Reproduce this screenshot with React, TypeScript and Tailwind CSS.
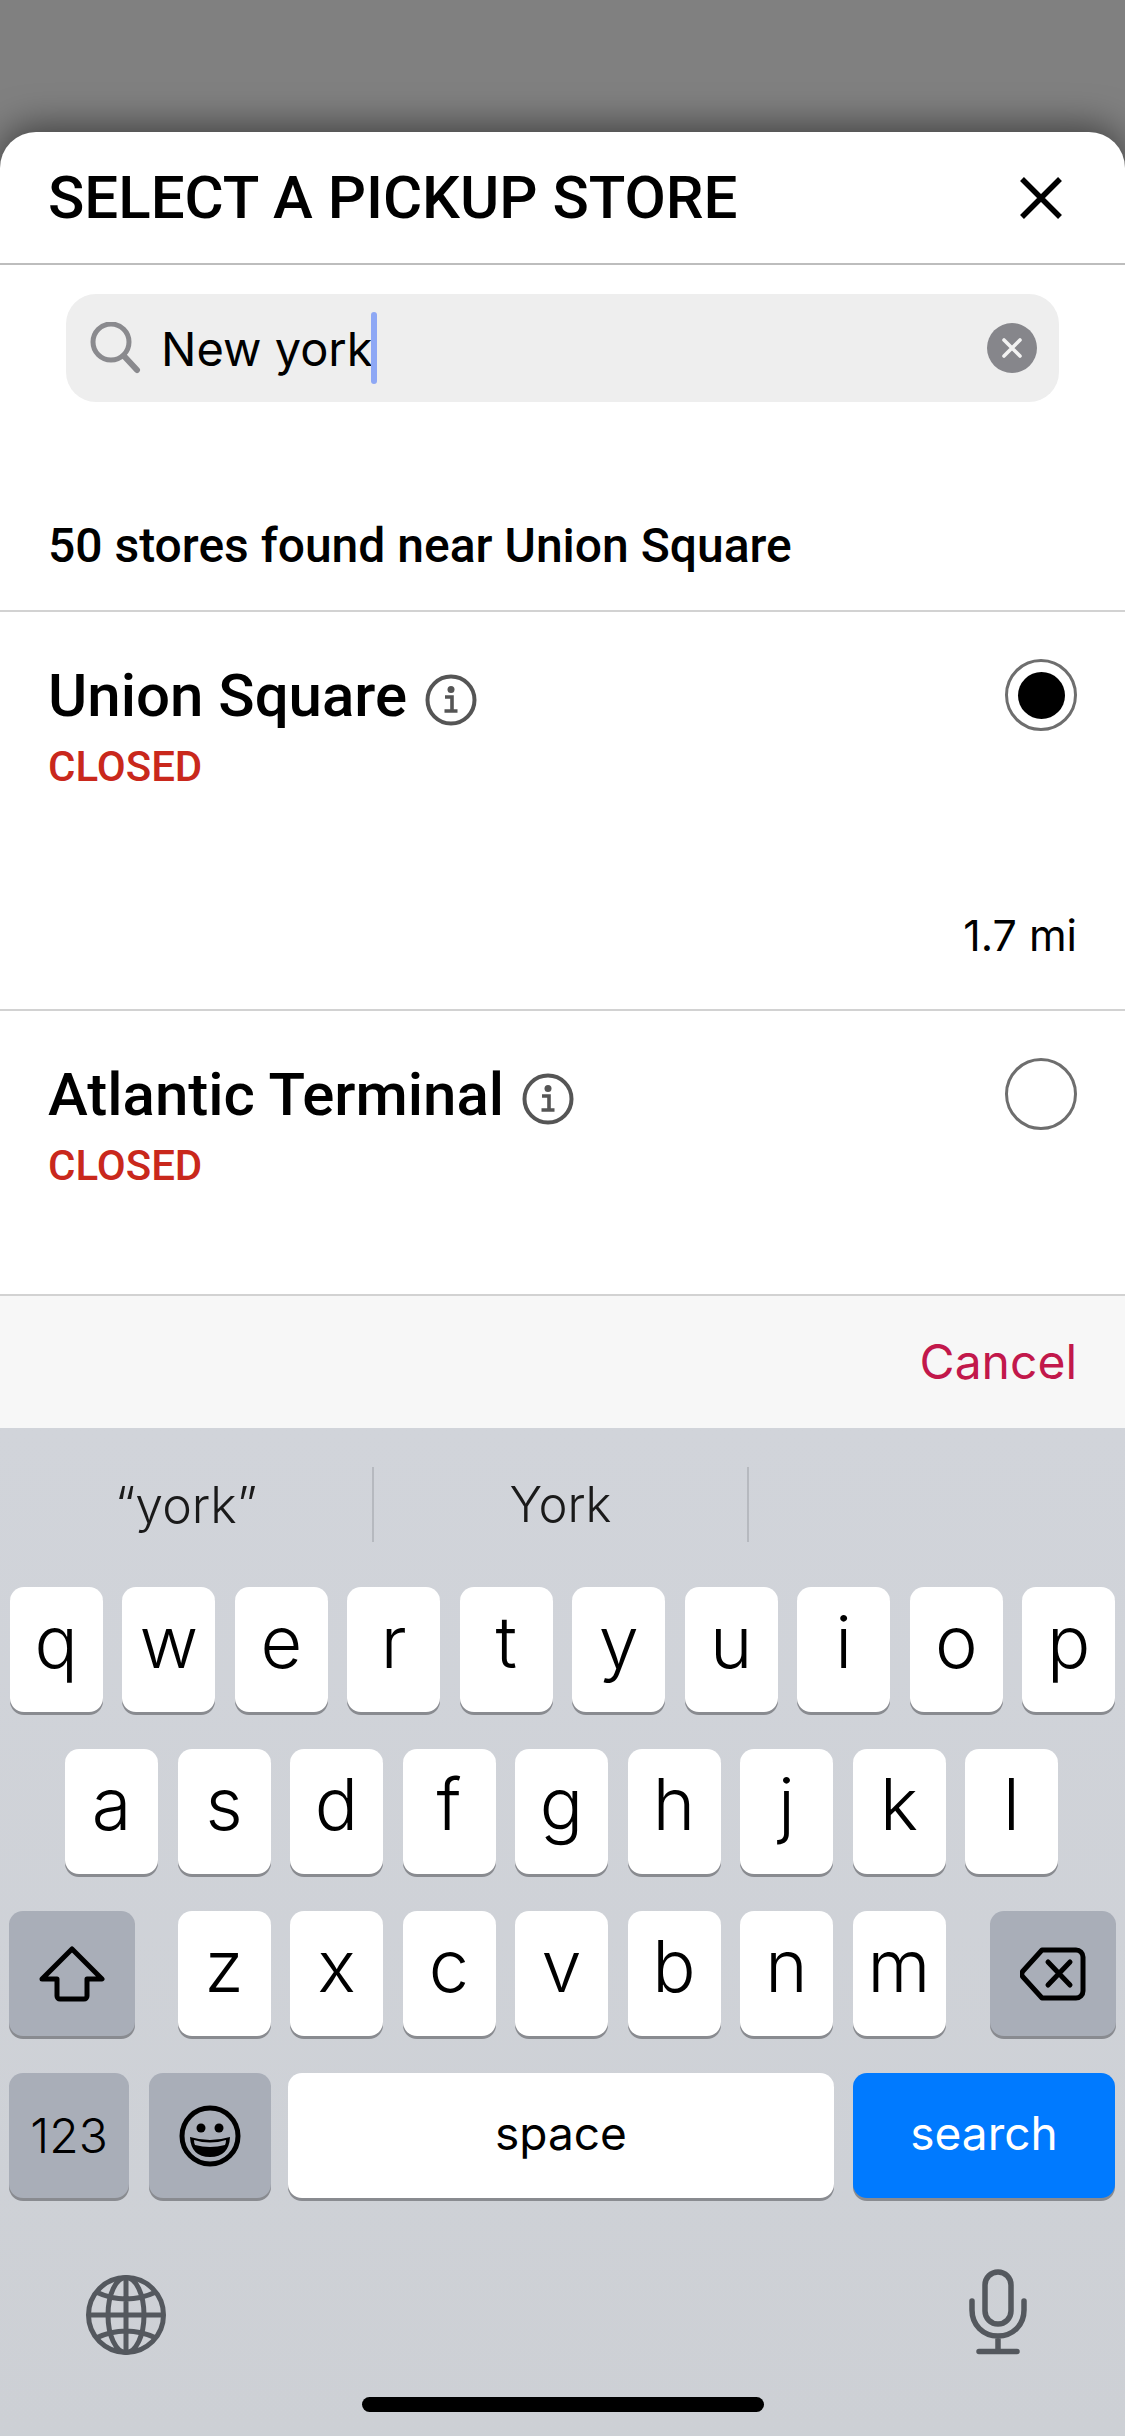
import React from 'react'

const roboto = "font-['Roboto',sans-serif]"
const ios = "font-['Inter',sans-serif]"

const rows = ['qwertyuiop', 'asdfghjkl', 'zxcvbnm']

const InfoIcon = () => (
  <svg width="52" height="52" viewBox="0 0 52 52" fill="none" className="ml-[18px] mt-[15px] shrink-0">
    <circle cx="26" cy="26" r="23.5" stroke="#555" strokeWidth="4" />
    <circle cx="26" cy="15.5" r="3.5" fill="#555" />
    <path d="M20 23h7v14M19.5 37h13" stroke="#555" strokeWidth="3.6" />
  </svg>
)

const Radio = ({ selected }: { selected?: boolean }) => (
  <div className="flex h-[72px] w-[72px] items-center justify-center rounded-full border-[3px] border-[#6e6e6e] bg-white">
    {selected && <div className="h-[47px] w-[47px] rounded-full bg-black" />}
  </div>
)

const StoreRow = ({ name, selected, distance, height }: { name: string; selected?: boolean; distance?: string; height: string }) => (
  <div className={`border-b-2 border-[#d2d2d2] px-[48px] pt-[47px] ${height}`}>
    <div className="flex items-start justify-between">
      <div>
        <div className={`flex items-start ${roboto}`}>
          <span className="text-[60px] font-medium leading-[74px] text-black">{name}</span>
          <InfoIcon />
        </div>
        <div className={`mt-[10px] text-[42px] font-medium leading-[48px] text-[#c9281c] ${roboto}`}>CLOSED</div>
      </div>
      <Radio selected={selected} />
    </div>
    {distance && <div className={`mt-[120px] text-right text-[43px] leading-[48px] text-black ${ios}`}>{distance}</div>}
  </div>
)

const Key = ({ children, className = '' }: { children: React.ReactNode; className?: string }) => (
  <div className={`flex h-[125px] items-center justify-center rounded-[14px] shadow-[0_3px_0_#898b90] ${className}`}>{children}</div>
)

const Letter = ({ ch }: { ch: string }) => (
  <Key className="w-[93px] bg-white">
    <span className={`-mt-[16px] text-[72px] font-light leading-none text-black ${ios}`}>{ch}</span>
  </Key>
)

const ShiftIcon = () => (
  <svg width="66" height="56" viewBox="0 0 66 56" fill="none">
    <path d="M33 3 L63 33 H48 V50 a3 3 0 0 1-3 3 H21 a3 3 0 0 1-3-3 V33 H3 Z" stroke="#000" strokeWidth="5" strokeLinejoin="round" />
  </svg>
)

const BackspaceIcon = () => (
  <svg width="66" height="54" viewBox="0 0 66 54" fill="none">
    <path d="M22 3 H56 a7 7 0 0 1 7 7 V44 a7 7 0 0 1-7 7 H22 L3 30 a4.5 4.5 0 0 1 0-6 Z" stroke="#000" strokeWidth="5" strokeLinejoin="round" />
    <path d="M28 15 L50 38 M50 15 L28 38" stroke="#000" strokeWidth="5" strokeLinecap="round" />
  </svg>
)

const EmojiIcon = () => (
  <svg width="62" height="62" viewBox="0 0 62 62" fill="none">
    <circle cx="31" cy="31" r="28" stroke="#000" strokeWidth="5" />
    <circle cx="22" cy="23" r="4.5" fill="#000" />
    <circle cx="40" cy="23" r="4.5" fill="#000" />
    <path d="M11 32 Q31 38 51 32 Q50 52 31 52 Q12 52 11 32 Z" fill="#000" />
    <path d="M15 35 Q31 40 47 35 Q47 38 46 40 Q31 44 16 40 Q15 38 15 35 Z" fill="#a9aeb8" />
  </svg>
)

const GlobeIcon = () => (
  <svg width="82" height="82" viewBox="0 0 82 82" fill="none" stroke="#54585e" strokeWidth="5">
    <circle cx="41" cy="41" r="37.5" />
    <ellipse cx="41" cy="41" rx="18" ry="37.5" />
    <path d="M41 3.5V78.5M3.5 41H78.5M11 18Q41 32 71 18M11 64Q41 50 71 64" />
  </svg>
)

const MicIcon = () => (
  <svg width="58" height="86" viewBox="0 0 58 86" fill="none" stroke="#54585e" strokeWidth="5.5" strokeLinecap="round">
    <rect x="16" y="3" width="26" height="52" rx="13" />
    <path d="M3 32V41C3 56 14 67 29 67C44 67 55 56 55 41V32M29 67V82M10 82.5H48" />
  </svg>
)

const App = () => {
  return (
    <div className="flex h-[2436px] w-[1125px] flex-col overflow-hidden bg-[#808080]">
      <div className="h-[132px] shrink-0" />

      {/* sheet */}
      <div className="shrink-0 rounded-t-[36px] bg-white shadow-[0_-6px_36px_rgba(0,0,0,0.5)]">
        <div className="flex h-[133px] items-center justify-between border-b-2 border-[#bdbdbd] px-[48px]">
          <div className={`text-[60px] font-medium leading-none text-black ${roboto}`}>SELECT A PICKUP STORE</div>
          <svg width="44" height="44" viewBox="0 0 44 44" className="mr-[14px]" fill="none">
            <path d="M3 3L41 41M41 3L3 41" stroke="#000" strokeWidth="5.5" />
          </svg>
        </div>

        <div className="h-[347px] border-b-2 border-[#d2d2d2] pt-[29px]">
          <div className="mx-[66px] flex h-[108px] items-center rounded-[30px] bg-[#eeeeee] pl-[24px] pr-[22px]">
            <svg width="54" height="52" viewBox="0 0 54 52" fill="none" className="shrink-0">
              <circle cx="21" cy="20" r="18" stroke="#8a8a8e" strokeWidth="5" />
              <path d="M34 34L47 48" stroke="#8a8a8e" strokeWidth="6" strokeLinecap="round" />
            </svg>
            <span className={`ml-[17px] text-[47px] leading-none text-black ${ios}`}>New york</span>
            <div className="-ml-[2px] h-[72px] w-[6px] rounded-full bg-[#8ea8f5]" />
            <div className="ml-auto flex h-[50px] w-[50px] items-center justify-center rounded-full bg-[#86868b]">
              <svg width="22" height="22" viewBox="0 0 22 22" fill="none">
                <path d="M3 3L19 19M19 3L3 19" stroke="#f2f2f2" strokeWidth="3.6" strokeLinecap="round" />
              </svg>
            </div>
          </div>
          <div className={`ml-[48px] mt-[116px] text-[48px] font-medium leading-[56px] text-black ${roboto}`}>50 stores found near Union Square</div>
        </div>

        <StoreRow name="Union Square" selected distance="1.7 mi" height="h-[399px]" />
        <StoreRow name="Atlantic Terminal" height="h-[285px]" />

        <div className="flex h-[132px] items-center justify-end bg-[#f7f7f7] px-[48px]">
          <span className={`text-[48px] leading-none text-[#c2184b] ${ios}`}>Cancel</span>
        </div>
      </div>

      {/* keyboard */}
      <div className="relative flex-1 bg-gradient-to-b from-[#d1d4da] to-[#cdd0d5]">
        <div className="flex h-[159px] items-start pt-[39px]">
          <div className="flex h-[75px] w-[374px] items-center justify-center border-r-2 border-[#b6b9bf]">
            <span className={`text-[50px] font-light leading-none text-[#1a1a1a] ${ios}`}>“york”</span>
          </div>
          <div className="flex h-[75px] w-[375px] items-center justify-center border-r-2 border-[#b6b9bf]">
            <span className={`text-[49px] font-light leading-none text-[#1a1a1a] ${ios}`}>York</span>
          </div>
        </div>

        <div className="flex flex-col gap-[37px]">
          <div className="flex justify-center gap-[19.5px]">
            {rows[0].split('').map((c) => <Letter key={c} ch={c} />)}
          </div>
          <div className="flex justify-center gap-[19.5px] pr-[2px]">
            {rows[1].split('').map((c) => <Letter key={c} ch={c} />)}
          </div>
          <div className="flex items-center justify-between px-[9px]">
            <Key className="w-[126px] bg-[#a9aeb8]"><ShiftIcon /></Key>
            <div className="mr-[2px] flex gap-[19.5px]">
              {rows[2].split('').map((c) => <Letter key={c} ch={c} />)}
            </div>
            <Key className="w-[126px] bg-[#a9aeb8]"><BackspaceIcon /></Key>
          </div>
          <div className="flex px-[9px]">
            <Key className="w-[120px] bg-[#a9aeb8]">
              <span className={`text-[48px] font-light leading-none text-black ${ios}`}>123</span>
            </Key>
            <Key className="ml-[20px] w-[122px] bg-[#a9aeb8]"><EmojiIcon /></Key>
            <Key className="ml-[17px] w-[546px] bg-white">
              <span className={`-mt-[6px] text-[46px] font-normal leading-none text-black ${ios}`}>space</span>
            </Key>
            <Key className="ml-[19px] w-[262px] bg-[#007aff] shadow-[0_3px_0_#5f6368]">
              <span className={`-mt-[6px] text-[46px] font-normal leading-none text-white ${ios}`}>search</span>
            </Key>
          </div>
        </div>

        <div className="flex items-start justify-between pl-[85px] pr-[98px] pt-[71px]">
          <div className="mt-[5px]"><GlobeIcon /></div>
          <MicIcon />
        </div>

        <div className="absolute bottom-[24px] left-1/2 h-[15px] w-[402px] -translate-x-1/2 rounded-full bg-black" />
      </div>
    </div>
  )
}

export default App
